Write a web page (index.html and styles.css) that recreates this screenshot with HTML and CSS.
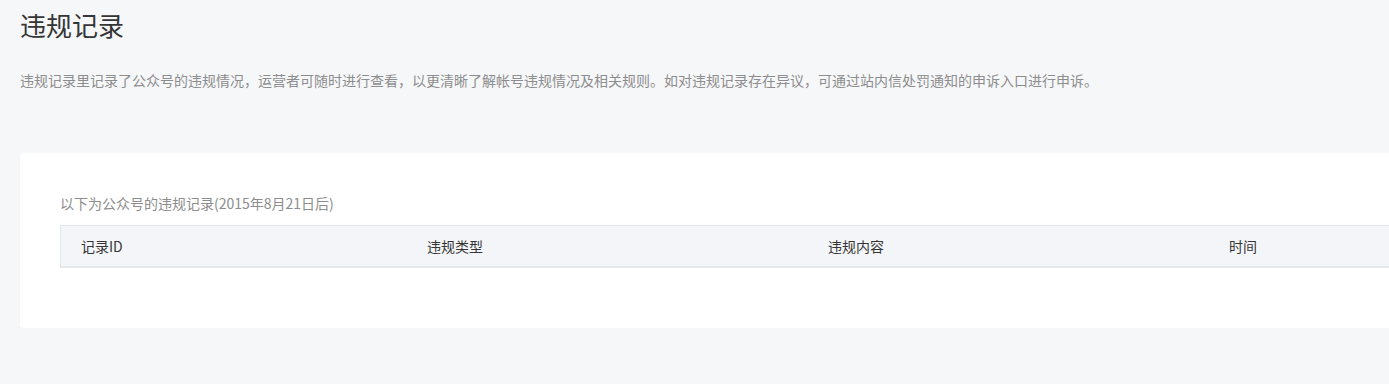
FILE: index.html
```html
<!DOCTYPE html>
<html>
<head>
	<meta charset="utf-8">
	<title>违规记录</title>
	<link rel="stylesheet" href="styles.css">
</head>
<body>
	<div class="page">
		<h2 class="page-title">违规记录</h2>
		<p class="page-desc">违规记录里记录了公众号的违规情况，运营者可随时进行查看，以更清晰了解帐号违规情况及相关规则。如对违规记录存在异议，可通过站内信处罚通知的申诉入口进行申诉。</p>

		<div class="card">
			<p class="card-tips">以下为公众号的违规记录(2015年8月21日后)</p>
			<table class="record-table">
				<thead>
					<tr>
						<th class="col-id">记录ID</th>
						<th class="col-type">违规类型</th>
						<th class="col-content">违规内容</th>
						<th class="col-time">时间</th>
					</tr>
				</thead>
				<tbody></tbody>
			</table>
		</div>
	</div>
</body>
</html>
```

FILE: styles.css
```css
html,
body {
	margin: 0;
	padding: 0;
	background-color: #f6f7f9;
	overflow: hidden;
}

body {
	font-family: "Noto Sans CJK SC", "Liberation Sans", sans-serif;
	font-size: 14px;
	color: #353535;
}

.page {
	width: 1409px;
	padding: 0 20px;
}

.page-title {
	margin: 7px 0 0;
	font-size: 26px;
	font-weight: normal;
	line-height: 36px;
	color: #353535;
}

.page-desc {
	margin: 27px 0 0;
	line-height: 20px;
	color: #8d8d8d;
	white-space: nowrap;
}

.card {
	margin-top: 63px;
	padding: 40px 40px 60px;
	background-color: #fff;
	border-radius: 3px;
	box-shadow: 0 1px 2px rgba(0, 0, 0, 0.04);
}

.card-tips {
	margin: 0 0 12px;
	line-height: 20px;
	color: #8d8d8d;
}

.record-table {
	width: 1329px;
	border-collapse: collapse;
	table-layout: fixed;
}

.record-table th {
	height: 40px;
	padding: 0 0 0 20px;
	background-color: #f4f5f9;
	border-top: 1px solid #e4e8eb;
	border-bottom: 2px solid #e4e8eb;
	font-weight: normal;
	text-align: left;
	color: #353535;
}

.record-table th.col-id {
	width: 326px;
	border-left: 1px solid #e4e8eb;
}

.record-table th.col-type,
.record-table th.col-content {
	width: 381px;
}
```
